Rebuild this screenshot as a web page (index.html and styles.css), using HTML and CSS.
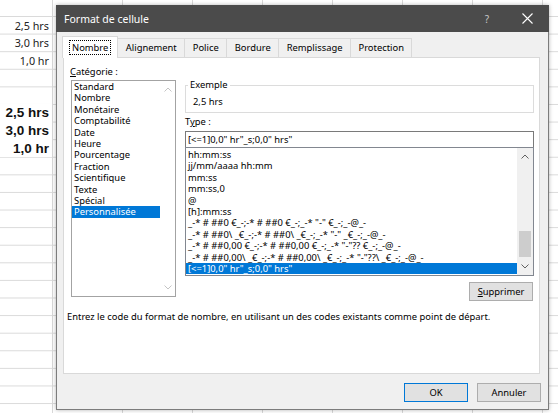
FILE: index.html
```html
<!DOCTYPE html>
<html lang="fr">
<head>
    <meta charset="UTF-8">
    <meta name="viewport" content="width=device-width, initial-scale=1.0">
    <title>Format de cellule</title>
    <link rel="stylesheet" href="styles.css">
</head>
<body>
    <!-- feuille en arriere-plan -->
    <div class="sheet">
        <div class="col-a">
            <div class="cell">2,5 hrs</div>
            <div class="cell">3,0 hrs</div>
            <div class="cell">1,0 hr</div>
            <div class="cell"></div>
            <div class="cell"></div>
            <div class="cell bold">2,5 hrs</div>
            <div class="cell bold">3,0 hrs</div>
            <div class="cell bold">1,0 hr</div>
        </div>
    </div>

    <div class="dialog">
        <div class="titlebar">
            <span class="title">Format de cellule</span>
            <span class="help">?</span>
            <span class="close">
                <svg width="11" height="11" viewBox="0 0 11 11"><path d="M0.5 0.5 L10.5 10.5 M10.5 0.5 L0.5 10.5" stroke="#fff" stroke-width="1.1" fill="none"/></svg>
            </span>
        </div>

        <div class="dialog-body">
            <div class="tabs">
                <div class="tab active"><span class="focus">Nombre</span></div>
                <div class="tab">Alignement</div>
                <div class="tab">Police</div>
                <div class="tab">Bordure</div>
                <div class="tab">Remplissage</div>
                <div class="tab">Protection</div>
            </div>

            <div class="panel">
                <div class="panel-main">
                    <div class="cat-col">
                        <div class="label"><u>C</u>atégorie :</div>
                        <div class="listbox cat-list">
                            <ul class="items">
                                <li>Standard</li>
                                <li>Nombre</li>
                                <li>Monétaire</li>
                                <li>Comptabilité</li>
                                <li>Date</li>
                                <li>Heure</li>
                                <li>Pourcentage</li>
                                <li>Fraction</li>
                                <li>Scientifique</li>
                                <li>Texte</li>
                                <li>Spécial</li>
                                <li class="selected">Personnalisée</li>
                            </ul>
                            <div class="vscroll off">
                                <div class="arrow"><svg width="8" height="5" viewBox="0 0 8 5"><path d="M0.5 4.5 L4 1 L7.5 4.5" stroke="#c4c4c4" fill="none"/></svg></div>
                                <div class="track"></div>
                                <div class="arrow"><svg width="8" height="5" viewBox="0 0 8 5"><path d="M0.5 0.5 L4 4 L7.5 0.5" stroke="#c4c4c4" fill="none"/></svg></div>
                            </div>
                        </div>
                    </div>

                    <div class="fmt-col">
                        <fieldset class="group">
                            <legend>Exemple</legend>
                            <div class="sample">2,5 hrs</div>
                        </fieldset>
                        <div class="label type-label">T<u>y</u>pe :</div>
                        <div class="textbox">[&lt;=1]0,0" hr"_s;0,0" hrs"</div>
                        <div class="listbox fmt-list">
                            <ul class="items">
                                <li>hh:mm:ss</li>
                                <li>jj/mm/aaaa hh:mm</li>
                                <li>mm:ss</li>
                                <li>mm:ss,0</li>
                                <li>@</li>
                                <li>[h]:mm:ss</li>
                                <li>_-* # ##0 €_-;-* # ##0 €_-;_-* "-" €_-;_-@_-</li>
                                <li>_-* # ##0\ _€_-;-* # ##0\ _€_-;_-* "-" _€_-;_-@_-</li>
                                <li>_-* # ##0,00 €_-;-* # ##0,00 €_-;_-* "-"?? €_-;_-@_-</li>
                                <li>_-* # ##0,00\ _€_-;-* # ##0,00\ _€_-;_-* "-"??\ _€_-;_-@_-</li>
                                <li class="selected">[&lt;=1]0,0" hr"_s;0,0" hrs"</li>
                            </ul>
                            <div class="vscroll">
                                <div class="arrow"><svg width="8" height="5" viewBox="0 0 8 5"><path d="M0.5 4.5 L4 1 L7.5 4.5" stroke="#606060" fill="none"/></svg></div>
                                <div class="track"><div class="thumb"></div></div>
                                <div class="arrow"><svg width="8" height="5" viewBox="0 0 8 5"><path d="M0.5 0.5 L4 4 L7.5 0.5" stroke="#606060" fill="none"/></svg></div>
                            </div>
                        </div>
                        <button type="button" class="btn del"><u>S</u>upprimer</button>
                    </div>
                </div>

                <p class="hint">Entrez le code du format de nombre, en utilisant un des codes existants comme point de départ.</p>
            </div>

            <div class="footer">
                <button type="button" class="btn ok">OK</button>
                <button type="button" class="btn">Annuler</button>
            </div>
        </div>
    </div>
</body>
</html>
```

FILE: styles.css
```css
* {
    box-sizing: border-box;
}

body {
    margin: 0;
    width: 558px;
    height: 413px;
    overflow: hidden;
    position: relative;
    background: #fff;
    font-family: "Noto Sans", sans-serif;
}

/* feuille excel */
.sheet {
    height: 413px;
    padding-top: 16.5px;
    background-color: #fff;
    background-image:
        linear-gradient(to right, #d8d8d8 1px, transparent 1px),
        linear-gradient(to bottom, #dadada 1px, transparent 1px);
    background-size: 70px 100%, 100% 17.6px;
    background-position: 52px 0, 0 16px;
}
.col-a {
    width: 52px;
}
.cell {
    height: 17.6px;
    line-height: 17.6px;
    padding-right: 3px;
    text-align: right;
    font-size: 10.8px;
    color: #222;
    white-space: nowrap;
}
.cell.bold {
    font-family: "Liberation Sans", Arial, sans-serif;
    font-weight: bold;
    font-size: 13.5px;
    color: #111;
    background: #fff;
}

/* fenetre */
.dialog {
    position: absolute;
    left: 56px;
    top: 5px;
    width: 493px;
    height: 405px;
    background: #f0f0f0;
    border: 1px solid #7c7c7c;
    border-top: none;
    box-shadow: 0 0 4px rgba(0,0,0,0.3);
    font-size: 9.4px;
    color: #000;
    display: flex;
    flex-direction: column;
}
.titlebar {
    height: 27px;
    margin: 0 -1px;
    background: #4b4b4b;
    color: #fff;
    display: flex;
    align-items: center;
    padding-left: 8px;
}
.title {
    flex: 1;
    font-size: 10.5px;
}
.help {
    width: 36px;
    text-align: center;
    color: #c8c8c8;
    font-size: 10px;
}
.close {
    width: 44px;
    height: 27px;
    display: flex;
    align-items: center;
    justify-content: center;
}

.dialog-body {
    padding: 4px 8px 0 6px;
}

/* onglets */
.tabs {
    display: flex;
    align-items: flex-end;
    height: 21px;
}
.tab {
    height: 19px;
    line-height: 17px;
    padding: 0 7.5px;
    margin-left: -1px;
    border: 1px solid #d9d9d9;
    border-bottom: none;
    background: #f0f0f0;
    white-space: nowrap;
}
.tab.active {
    height: 22px;
    margin-bottom: -1px;
    padding: 2px 6px 0 6px;
    background: #fff;
    position: relative;
    z-index: 1;
}
.focus {
    display: inline-block;
    line-height: 13px;
    padding: 0 2px;
    border: 1px dotted #000;
}

.panel {
    height: 317px;
    background: #fff;
    border: 1px solid #d9d9d9;
}
.panel-main {
    display: flex;
    gap: 9px;
    padding: 8px 5px 0 7px;
}

.label {
    line-height: 12px;
    height: 12px;
}
.cat-col .label {
    margin-left: -1px;
    margin-bottom: 2px;
}

.listbox {
    display: flex;
    border: 1px solid #a3a3a3;
    background: #fff;
    overflow: hidden;
}
.items {
    list-style: none;
    margin: 0;
    padding: 0;
    flex: 1;
    min-width: 0;
}
.items li {
    height: 11.4px;
    line-height: 11.4px;
    padding-left: 2px;
    white-space: nowrap;
}
.items li.selected {
    background: #0078d7;
    color: #fff;
}

.cat-list {
    width: 105px;
    height: 217px;
}

.vscroll {
    width: 16px;
    display: flex;
    flex-direction: column;
    background: #f0f0f0;
}
.vscroll.off {
    width: 15px;
    background: #fff;
}
.arrow {
    height: 17px;
    display: flex;
    align-items: center;
    justify-content: center;
}
.track {
    flex: 1;
    padding-top: 66px;
}
.thumb {
    width: 12px;
    height: 26px;
    margin: 0 auto;
    background: #cdcdcd;
}

.fmt-col {
    width: 349px;
    display: flex;
    flex-direction: column;
}
.group {
    margin: 13px 0 0 0;
    padding: 5px 7px 4px 7px;
    border: 1px solid #dcdcdc;
    min-width: 0;
}
.group legend {
    padding: 0 2px;
    margin-left: -5px;
    line-height: 12px;
}
.sample {
    line-height: 12px;
}
.type-label {
    margin: 3px 0 3px 0;
}
.textbox {
    height: 17px;
    line-height: 15px;
    padding-left: 2px;
    border: 1px solid #7a7a7a;
    white-space: nowrap;
}
.fmt-list {
    height: 129px;
    margin-top: -1px;
    border-color: #828790;
}
.fmt-list .items {
    padding-top: 1px;
}

.btn {
    font: inherit;
    color: #000;
    width: 64px;
    height: 19px;
    padding: 0;
    line-height: 17px;
    background: #e1e1e1;
    border: 1px solid #adadad;
}
.del {
    align-self: flex-end;
    margin: 6px 1px 0 0;
}
.ok {
    border-color: #0078d7;
}

.hint {
    margin: 10px 0 0 0;
    padding-left: 3px;
    line-height: 12px;
}

.footer {
    display: flex;
    justify-content: flex-end;
    gap: 9px;
    padding-top: 9px;
    margin-right: -1px;
}
```
